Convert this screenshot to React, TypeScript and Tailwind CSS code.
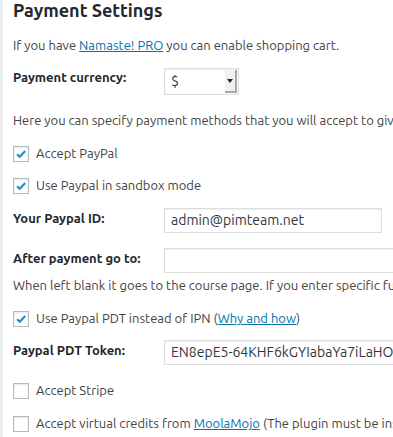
import React from "react";

function Check({ checked }: { checked?: boolean }) {
  return (
    <span className="flex h-4 w-4 shrink-0 items-center justify-center border border-[#b4b9be] bg-white shadow-[inset_0_1px_2px_rgba(0,0,0,0.1)]">
      {checked && (
        <svg viewBox="0 0 16 16" className="h-4 w-4">
          <path d="M3.5 8.2 L6.6 11.2 L12.8 4.6" fill="none" stroke="#1e8cbe" strokeWidth="2.4" />
        </svg>
      )}
    </span>
  );
}

function CheckRow({ checked, children }: { checked?: boolean; children: React.ReactNode }) {
  return (
    <div className="flex h-4 items-center gap-[7px]">
      <Check checked={checked} />
      <span>{children}</span>
    </div>
  );
}

function Label({ children }: { children: React.ReactNode }) {
  return <span className="w-[151px] shrink-0 pt-[1px] font-bold text-[#23282d]">{children}</span>;
}

const inputCls =
  "flex h-[25px] shrink-0 items-center border border-[#ddd] bg-white px-[6px] text-[14px] text-[#32373c] shadow-[inset_0_1px_2px_rgba(0,0,0,0.07)]";

export default function App() {
  return (
    <div
      className="h-[437px] w-[393px] overflow-hidden whitespace-nowrap border-l-[3px] border-[#ececec] bg-white pl-[10px] text-[13px] text-[#444]"
      style={{ fontFamily: "'Ubuntu', 'Noto Sans', sans-serif" }}
    >
      <h2 className="text-[18px] font-bold leading-[21px] text-[#23282d]">Payment Settings</h2>

      <p className="mt-[16px] leading-[16px]">
        If you have <a className="text-[#0073aa] underline">Namaste! PRO</a> you can enable shopping cart.
      </p>

      {/* currency select */}
      <div className="mt-[15px] flex items-start">
        <span className="w-[151px] shrink-0 font-bold text-[#23282d]">Payment currency:</span>
        <div className="flex h-[27px] w-[75px] shrink-0 items-center justify-between border border-[#ddd] bg-white pl-[6px] shadow-[inset_0_1px_2px_rgba(0,0,0,0.07)]">
          <span className="text-[14px] text-[#32373c]">$</span>
          <span className="mr-[1px] flex h-[23px] w-[12px] items-center justify-center border-b-2 border-r-2 border-[#a8a8a8] bg-[#f0f0f0]">
            <svg viewBox="0 0 6 4" className="h-[4px] w-[6px]">
              <path d="M0 0 H6 L3 4 Z" fill="#222" />
            </svg>
          </span>
        </div>
      </div>

      <p className="mt-[17px] leading-[16px]">
        Here you can specify payment methods that you will accept to give access to the courses.
      </p>

      <div className="mt-[18px] flex flex-col gap-[16px]">
        <CheckRow checked>Accept PayPal</CheckRow>
        <CheckRow checked>Use Paypal in sandbox mode</CheckRow>
      </div>

      <div className="mt-[14px] flex items-start">
        <Label>Your Paypal ID:</Label>
        <div className={`${inputCls} w-[218px]`}>admin@pimteam.net</div>
      </div>

      <div className="mt-[15px] flex items-start">
        <Label>After payment go to:</Label>
        <div className={`${inputCls} w-[300px]`} />
      </div>

      <p className="mt-[4px] leading-[16px]">
        When left blank it goes to the course page. If you enter specific full URL, the user will be redirected there.
      </p>

      <div className="mt-[18px]">
        <CheckRow checked>
          Use Paypal PDT instead of IPN (<a className="text-[#0073aa] underline">Why and how</a>)
        </CheckRow>
      </div>

      <div className="mt-[13px] flex items-start">
        <Label>Paypal PDT Token:</Label>
        <div className={`${inputCls} w-[300px]`}>EN8epE5-64KHF6kGYIabaYa7iLaHOxTXz</div>
      </div>

      <div className="mt-[18px] flex flex-col gap-[17px]">
        <CheckRow>Accept Stripe</CheckRow>
        <CheckRow>
          Accept virtual credits from <a className="text-[#0073aa] underline">MoolaMojo</a> (The plugin must be installed and active)
        </CheckRow>
      </div>
    </div>
  );
}
